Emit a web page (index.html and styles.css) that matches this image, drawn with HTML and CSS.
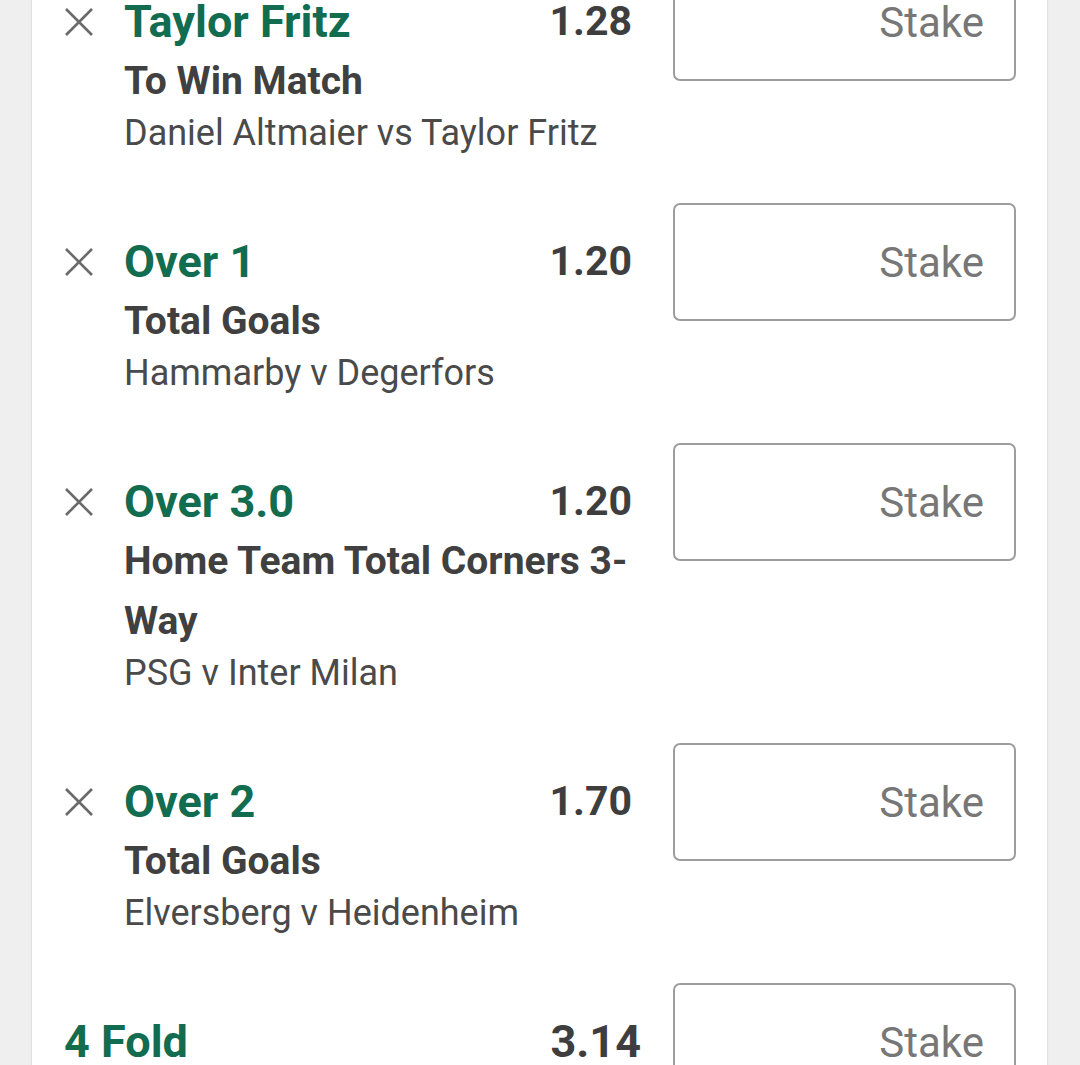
FILE: index.html
```html
<!DOCTYPE html>
<html lang="en">
<head>
<meta charset="utf-8">
<title>Bet slip</title>
<link rel="stylesheet" href="styles.css">
</head>
<body>
<div class="card">
  <div class="list">
    <div class="bet">
      <button class="remove" aria-label="Remove"><svg width="30" height="30" viewBox="0 0 30 30"><path d="M2 2 L28 28 M28 2 L2 28"/></svg></button>
      <div class="info">
        <div class="head"><span class="sel">Taylor Fritz</span><span class="odds">1.28</span></div>
        <div class="market">To Win Match</div>
        <div class="event">Daniel Altmaier vs Taylor Fritz</div>
      </div>
      <input class="stake" type="text" placeholder="Stake">
    </div>
    <div class="bet">
      <button class="remove" aria-label="Remove"><svg width="30" height="30" viewBox="0 0 30 30"><path d="M2 2 L28 28 M28 2 L2 28"/></svg></button>
      <div class="info">
        <div class="head"><span class="sel">Over 1</span><span class="odds">1.20</span></div>
        <div class="market">Total Goals</div>
        <div class="event">Hammarby v Degerfors</div>
      </div>
      <input class="stake" type="text" placeholder="Stake">
    </div>
    <div class="bet">
      <button class="remove" aria-label="Remove"><svg width="30" height="30" viewBox="0 0 30 30"><path d="M2 2 L28 28 M28 2 L2 28"/></svg></button>
      <div class="info">
        <div class="head"><span class="sel">Over 3.0</span><span class="odds">1.20</span></div>
        <div class="market">Home Team Total Corners 3-Way</div>
        <div class="event">PSG v Inter Milan</div>
      </div>
      <input class="stake" type="text" placeholder="Stake">
    </div>
    <div class="bet">
      <button class="remove" aria-label="Remove"><svg width="30" height="30" viewBox="0 0 30 30"><path d="M2 2 L28 28 M28 2 L2 28"/></svg></button>
      <div class="info">
        <div class="head"><span class="sel">Over 2</span><span class="odds">1.70</span></div>
        <div class="market">Total Goals</div>
        <div class="event">Elversberg v Heidenheim</div>
      </div>
      <input class="stake" type="text" placeholder="Stake">
    </div>
    <div class="bet multi">
      <div class="info">
        <div class="head"><span class="sel">4 Fold</span><span class="odds">3.14</span></div>
      </div>
      <input class="stake" type="text" placeholder="Stake">
    </div>
  </div>
</div>
</body>
</html>
```

FILE: styles.css
```css
html, body {
  margin: 0;
  padding: 0;
  background: #efefef;
  height: 100%;
  overflow: hidden;
}

body {
  font-family: Roboto, "Noto Sans", Arial, sans-serif;
}

.card {
  margin: 0 33px 0 32px;
  min-height: 100%;
  background: #fff;
  box-shadow: 0 0 2px rgba(0, 0, 0, 0.18);
  padding-right: 31px;
}

.list {
  margin-top: -37px;
}

.bet {
  display: grid;
  grid-template-columns: 92px 508px 343px;
  align-items: start;
  padding-bottom: 48px;
}

.bet .stake {
  margin-left: 41px;
}

.remove {
  margin: 44px 0 0 32px;
  padding: 0;
  width: 30px;
  height: 30px;
  border: 0;
  background: none;
  display: flex;
}

.remove svg path {
  stroke: #6a6a6a;
  stroke-width: 2.6;
  fill: none;
}

.info {
  padding-top: 28px;
  min-width: 0;
}

.head {
  display: flex;
  justify-content: space-between;
  align-items: center;
  height: 60px;
}

.sel {
  color: #126c4f;
  font-weight: 700;
  font-size: 45px;
}

.odds {
  color: #3e3e3e;
  font-weight: 700;
  font-size: 41px;
}

.market {
  color: #404040;
  font-weight: 700;
  font-size: 39px;
  line-height: 60px;
}

.event {
  color: #4a4a4a;
  font-size: 36px;
  line-height: 44px;
}

.stake {
  box-sizing: border-box;
  width: 343px;
  height: 118px;
  border: 2px solid #9d9d9d;
  border-radius: 7px;
  padding: 0 30px 0 0;
  text-align: right;
  font-family: inherit;
  font-size: 42px;
  color: #333;
  background: #fff;
  outline: none;
}

.stake::placeholder {
  color: #777;
}

.bet.multi {
  grid-template-columns: 32px 577px 343px;
}

.bet.multi .info {
  grid-column: 2;
}

.bet.multi .stake {
  margin-left: 32px;
}

.bet.multi .sel,
.bet.multi .odds {
  font-size: 45px;
}
```
